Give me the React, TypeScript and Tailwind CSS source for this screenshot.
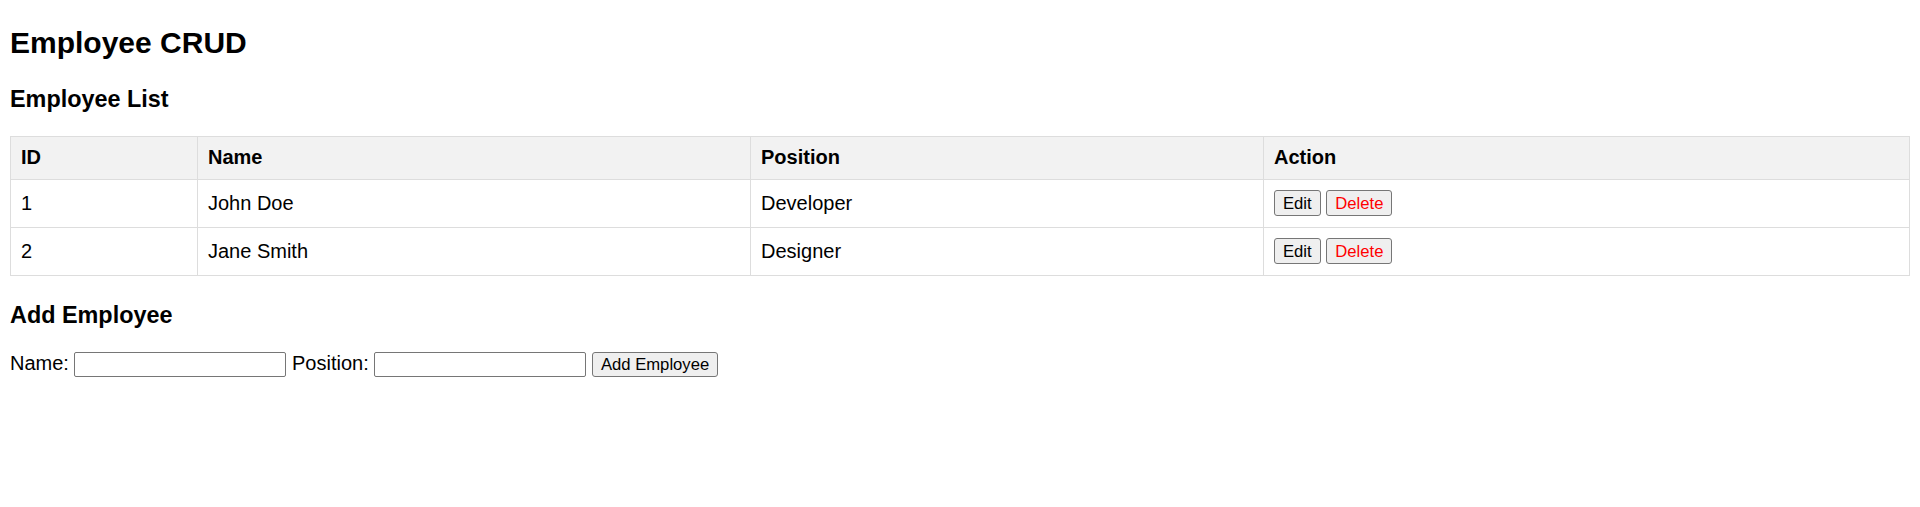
import React, { useState } from "react";

type Employee = { id: number; name: string; position: string };

const INITIAL: Employee[] = [
  { id: 1, name: "John Doe", position: "Developer" },
  { id: 2, name: "Jane Smith", position: "Designer" },
];

const btn =
  "inline-block align-middle px-[8px] border border-[#767676] rounded-[3px] bg-[#efefef] text-[16.67px] leading-[19px] hover:bg-[#e5e5e5]";

export default function App() {
  const [employees, setEmployees] = useState<Employee[]>(INITIAL);
  const [name, setName] = useState("");
  const [position, setPosition] = useState("");

  function add() {
    if (!name.trim() || !position.trim()) return;
    const nextId = employees.reduce((m, e) => Math.max(m, e.id), 0) + 1;
    setEmployees([...employees, { id: nextId, name: name.trim(), position: position.trim() }]);
    setName("");
    setPosition("");
  }

  function remove(id: number) {
    setEmployees(employees.filter((e) => e.id !== id));
  }

  return (
    <div
      className="min-h-screen bg-white text-black px-[10px] pt-[26px] flex flex-col"
      style={{ fontFamily: '"Liberation Sans", Arial, sans-serif' }}
    >
      <h1 className="text-[30px] font-bold leading-[34.5px]">Employee CRUD</h1>

      <h3 className="mt-[25.4px] text-[23.4px] font-bold leading-[27px]">Employee List</h3>

      <table className="mt-[23px] w-full table-fixed border-collapse text-[20px] leading-[23px]">
        <colgroup>
          <col className="w-[187px]" />
          <col className="w-[553px]" />
          <col className="w-[513px]" />
          <col />
        </colgroup>
        <thead>
          <tr className="h-[43px] bg-[#f2f2f2]">
            <th className="border border-[#dddddd] px-[10px] text-left align-middle font-bold">ID</th>
            <th className="border border-[#dddddd] px-[10px] text-left align-middle font-bold">Name</th>
            <th className="border border-[#dddddd] px-[10px] text-left align-middle font-bold">Position</th>
            <th className="border border-[#dddddd] px-[10px] text-left align-middle font-bold">Action</th>
          </tr>
        </thead>
        <tbody>
          {employees.map((e) => (
            <tr key={e.id} className="h-[48px]">
              <td className="border border-[#dddddd] px-[10px] align-middle">{e.id}</td>
              <td className="border border-[#dddddd] px-[10px] align-middle">{e.name}</td>
              <td className="border border-[#dddddd] px-[10px] align-middle">{e.position}</td>
              <td className="border border-[#dddddd] px-[10px] align-middle">
                <button type="button" className={`${btn} h-[26px]`}>
                  Edit
                </button>{" "}
                <button type="button" className={`${btn} h-[26px] text-[#ff0000]`} onClick={() => remove(e.id)}>
                  Delete
                </button>
              </td>
            </tr>
          ))}
        </tbody>
      </table>

      <h3 className="mt-[26px] text-[23.4px] font-bold leading-[27px]">Add Employee</h3>

      <div className="mt-[23px] text-[20px] leading-[23px]">
        Name:{" "}
        <input
          value={name}
          onChange={(ev) => setName(ev.target.value)}
          className="inline-block align-middle w-[212px] h-[25px] border border-[#767676] rounded-[2px] bg-white px-[2px] text-[16.67px] outline-none"
        />{" "}
        Position:{" "}
        <input
          value={position}
          onChange={(ev) => setPosition(ev.target.value)}
          className="inline-block align-middle w-[212px] h-[25px] border border-[#767676] rounded-[2px] bg-white px-[2px] text-[16.67px] outline-none"
        />{" "}
        <button type="button" className={`${btn} h-[25px]`} onClick={add}>
          Add Employee
        </button>
      </div>
    </div>
  );
}
